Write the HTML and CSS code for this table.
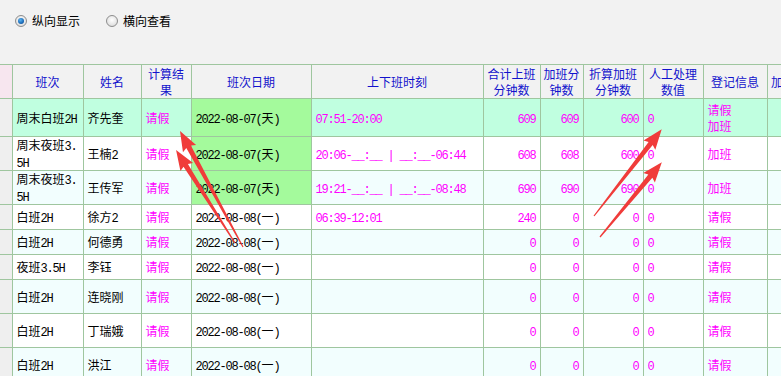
FILE: index.html
```html
<!DOCTYPE html>
<html lang="zh-CN">
<head>
<meta charset="utf-8">
<title>排班记录</title>
<link rel="stylesheet" href="styles.css">
</head>
<body>
<div class="toolbar">
  <label class="opt"><span class="radio checked"></span>纵向显示</label>
  <label class="opt"><span class="radio"></span>横向查看</label>
</div>
<table class="roster">
  <colgroup>
    <col class="c0"><col class="c1"><col class="c2"><col class="c3"><col class="c4"><col class="c5"><col class="c6"><col class="c7"><col class="c8"><col class="c9"><col class="c10"><col class="c11">
  </colgroup>
  <thead>
    <tr>
      <th class="corner"></th>
      <th>班次</th>
      <th>姓名</th>
      <th>计算结果</th>
      <th>班次日期</th>
      <th>上下班时刻</th>
      <th>合计上班分钟数</th>
      <th>加班分钟数</th>
      <th>折算加班分钟数</th>
      <th>人工处理数值</th>
      <th>登记信息</th>
      <th>加班申请状态</th>
    </tr>
  </thead>
  <tbody>
    <tr class="r-hi h38">
      <td class="lead"></td>
      <td>周末白班<span class="n">2H</span></td>
      <td>齐先奎</td>
      <td class="mg">请假</td>
      <td class="day"><span class="n">2022-08-07(</span>天<span class="n">)</span></td>
      <td class="mg"><span class="n">07:51-20:00</span></td>
      <td class="num"><span class="n">609</span></td>
      <td class="num"><span class="n">609</span></td>
      <td class="num"><span class="n">600</span></td>
      <td class="mg"><span class="n">0</span></td>
      <td class="mg">请假<br>加班</td>
      <td></td>
    </tr>
    <tr class="h34">
      <td class="lead"></td>
      <td class="brk">周末夜班<span class="n">3.5H</span></td>
      <td>王楠<span class="n">2</span></td>
      <td class="mg">请假</td>
      <td class="day"><span class="n">2022-08-07(</span>天<span class="n">)</span></td>
      <td class="mg"><span class="n">20:06-__:__ | __:__-06:44</span></td>
      <td class="num"><span class="n">608</span></td>
      <td class="num"><span class="n">608</span></td>
      <td class="num"><span class="n">600</span></td>
      <td class="mg"><span class="n">0</span></td>
      <td class="mg">加班</td>
      <td></td>
    </tr>
    <tr class="r-alt h34">
      <td class="lead"></td>
      <td class="brk">周末夜班<span class="n">3.5H</span></td>
      <td>王传军</td>
      <td class="mg">请假</td>
      <td class="day"><span class="n">2022-08-07(</span>天<span class="n">)</span></td>
      <td class="mg"><span class="n">19:21-__:__ | __:__-08:48</span></td>
      <td class="num"><span class="n">690</span></td>
      <td class="num"><span class="n">690</span></td>
      <td class="num"><span class="n">690</span></td>
      <td class="mg"><span class="n">0</span></td>
      <td class="mg">加班</td>
      <td></td>
    </tr>
    <tr class="h25">
      <td class="lead"></td>
      <td>白班<span class="n">2H</span></td>
      <td>徐方<span class="n">2</span></td>
      <td class="mg">请假</td>
      <td><span class="n">2022-08-08(</span>一<span class="n">)</span></td>
      <td class="mg"><span class="n">06:39-12:01</span></td>
      <td class="num"><span class="n">240</span></td>
      <td class="num"><span class="n">0</span></td>
      <td class="num"><span class="n">0</span></td>
      <td class="mg"><span class="n">0</span></td>
      <td class="mg">请假</td>
      <td></td>
    </tr>
    <tr class="r-alt h25">
      <td class="lead"></td>
      <td>白班<span class="n">2H</span></td>
      <td>何德勇</td>
      <td class="mg">请假</td>
      <td><span class="n">2022-08-08(</span>一<span class="n">)</span></td>
      <td class="mg"></td>
      <td class="num"><span class="n">0</span></td>
      <td class="num"><span class="n">0</span></td>
      <td class="num"><span class="n">0</span></td>
      <td class="mg"><span class="n">0</span></td>
      <td class="mg">请假</td>
      <td></td>
    </tr>
    <tr class="h25">
      <td class="lead"></td>
      <td>夜班<span class="n">3.5H</span></td>
      <td>李钰</td>
      <td class="mg">请假</td>
      <td><span class="n">2022-08-08(</span>一<span class="n">)</span></td>
      <td class="mg"></td>
      <td class="num"><span class="n">0</span></td>
      <td class="num"><span class="n">0</span></td>
      <td class="num"><span class="n">0</span></td>
      <td class="mg"><span class="n">0</span></td>
      <td class="mg">请假</td>
      <td></td>
    </tr>
    <tr class="r-alt h34">
      <td class="lead"></td>
      <td>白班<span class="n">2H</span></td>
      <td>连晓刚</td>
      <td class="mg">请假</td>
      <td><span class="n">2022-08-08(</span>一<span class="n">)</span></td>
      <td class="mg"></td>
      <td class="num"><span class="n">0</span></td>
      <td class="num"><span class="n">0</span></td>
      <td class="num"><span class="n">0</span></td>
      <td class="mg"><span class="n">0</span></td>
      <td class="mg">请假</td>
      <td></td>
    </tr>
    <tr class="h34">
      <td class="lead"></td>
      <td>白班<span class="n">2H</span></td>
      <td>丁瑞娥</td>
      <td class="mg">请假</td>
      <td><span class="n">2022-08-08(</span>一<span class="n">)</span></td>
      <td class="mg"></td>
      <td class="num"><span class="n">0</span></td>
      <td class="num"><span class="n">0</span></td>
      <td class="num"><span class="n">0</span></td>
      <td class="mg"><span class="n">0</span></td>
      <td class="mg">请假</td>
      <td></td>
    </tr>
    <tr class="r-alt h34">
      <td class="lead"></td>
      <td>白班<span class="n">2H</span></td>
      <td>洪江</td>
      <td class="mg">请假</td>
      <td><span class="n">2022-08-08(</span>一<span class="n">)</span></td>
      <td class="mg"></td>
      <td class="num"><span class="n">0</span></td>
      <td class="num"><span class="n">0</span></td>
      <td class="num"><span class="n">0</span></td>
      <td class="mg"><span class="n">0</span></td>
      <td class="mg">请假</td>
      <td></td>
    </tr>
  </tbody>
</table>
<svg class="marks" width="781" height="376" viewBox="0 0 781 376" aria-hidden="true">
  <g fill="#f03c3a">
    <polygon transform="translate(243,247) rotate(-118.5)" points="0,-0.6 114,-2.6 112,-7.5 132,0 112,7.5 114,2.6 0,0.6"/>
    <polygon transform="translate(235,243) rotate(-122.4)" points="0,-0.6 92,-2.6 90,-7.5 110,0 90,7.5 92,2.6 0,0.6"/>
    <polygon transform="translate(594,216) rotate(-52)" points="0,-0.6 92,-2.6 90,-7.5 110,0 90,7.5 92,2.6 0,0.6"/>
    <polygon transform="translate(600,237) rotate(-50.4)" points="0,-0.6 79,-2.6 77,-7.5 97,0 77,7.5 79,2.6 0,0.6"/>
  </g>
</svg>
</body>
</html>
```
FILE: styles.css
```css
html, body {
  margin: 0;
  padding: 0;
  overflow: hidden;
}
body {
  position: relative;
  width: 781px;
  height: 376px;
  background: #f2f2f2;
  font-family: "Noto Sans CJK SC", "Liberation Sans", sans-serif;
  font-size: 12px;
  color: #000;
}
.toolbar {
  height: 64px;
  box-sizing: border-box;
  padding: 14px 0 0 15px;
  display: flex;
  align-items: flex-start;
  gap: 26px;
}
.opt {
  display: flex;
  align-items: center;
  gap: 5px;
  height: 14px;
  line-height: 14px;
  color: #000;
}
.radio {
  width: 12px;
  height: 12px;
  box-sizing: border-box;
  border-radius: 50%;
  border: 1px solid #8d8d8d;
  background: radial-gradient(circle at 50% 40%, #ffffff 0%, #e6e6e6 60%, #cfcfcf 100%);
  display: flex;
  align-items: center;
  justify-content: center;
}
.radio.checked::after {
  content: "";
  width: 6px;
  height: 6px;
  border-radius: 50%;
  background: radial-gradient(circle at 40% 35%, #5ab4f0 0%, #1a6ab8 60%, #0d3f78 100%);
}

.roster {
  border-collapse: collapse;
  table-layout: fixed;
  width: 827px;
}
.c0 { width: 12px; }
.c1 { width: 71px; }
.c2 { width: 58px; }
.c3 { width: 50px; }
.c4 { width: 120px; }
.c5 { width: 172px; }
.c6 { width: 57px; }
.c7 { width: 43px; }
.c8 { width: 60px; }
.c9 { width: 60px; }
.c10 { width: 64px; }
.c11 { width: 80px; }

.roster th, .roster td {
  box-sizing: border-box;
  border: 1px solid #9fc69f;
  vertical-align: middle;
  overflow: hidden;
}
.roster th:first-child, .roster td:first-child {
  border-left: none;
}
.roster th {
  height: 34px;
  padding: 0 2px;
  background: #f2f2f2;
  color: #1212cc;
  font-weight: normal;
  line-height: 16px;
  text-align: center;
}
.roster th.corner {
  background: #f7e6ef;
}
.roster td {
  padding: 0 4px;
  line-height: 16px;
  text-align: left;
  background: #fff;
}
.roster td.lead {
  padding: 0;
  background: #efefef;
}
.roster tr.r-alt td { background: #f2fefe; }
.roster tr.r-hi td { background: #c0ffe0; }
.roster tr td.lead { background: #efefef; }
.roster tr td.day { background: #a4fa9c; }

.h38 td { height: 38px; }
.h34 td { height: 34px; }
.h25 td { height: 25px; }

.n {
  font-family: "Liberation Mono", "DejaVu Sans Mono", monospace;
  letter-spacing: -1.2px;
  line-height: 12px;
}
.brk {
  word-break: break-all;
  line-height: 16.5px !important;
}
.mg { color: #ff00ff; }
.num { color: #ff00ff; text-align: right !important; }

.marks {
  position: absolute;
  left: 0;
  top: 0;
  pointer-events: none;
}
```
